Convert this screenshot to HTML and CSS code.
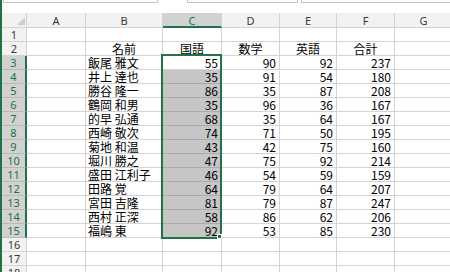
FILE: index.html
```html
<!DOCTYPE html>
<html lang="ja">
<head>
  <meta charset="UTF-8" />
  <title>Book1 - Excel</title>
  <link rel="stylesheet" href="styles.css">
</head>
<body>
  <div class="topbar">
    <div class="namebox"></div>
    <div class="fxbox"></div>
    <div class="formula"></div>
  </div>

  <div class="sheet">
    <div class="corner">
      <svg width="8" height="8" viewBox="0 0 8 8"><polygon points="8,0 8,8 0,8" fill="#cfcfcf"/></svg>
    </div>
    <div class="ch">A</div>
    <div class="ch">B</div>
    <div class="ch sel">C</div>
    <div class="ch">D</div>
    <div class="ch">E</div>
    <div class="ch">F</div>
    <div class="ch">G</div>

    <div class="rh">1</div>
    <div class="c"></div><div class="c"></div><div class="c"></div><div class="c"></div><div class="c"></div><div class="c"></div><div class="c"></div>

    <div class="rh">2</div>
    <div class="c"></div>
    <div class="c ctr">名前</div>
    <div class="c ctr">国語</div>
    <div class="c ctr">数学</div>
    <div class="c ctr">英語</div>
    <div class="c ctr">合計</div>
    <div class="c"></div>

    <div class="rh sel">3</div>
    <div class="c"></div><div class="c">飯尾 雅文</div><div class="c num">55</div><div class="c num">90</div><div class="c num">92</div><div class="c num">237</div><div class="c"></div>

    <div class="rh sel">4</div>
    <div class="c"></div><div class="c">井上 達也</div><div class="c num hi">35</div><div class="c num">91</div><div class="c num">54</div><div class="c num">180</div><div class="c"></div>

    <div class="rh sel">5</div>
    <div class="c"></div><div class="c">勝谷 隆一</div><div class="c num hi">86</div><div class="c num">35</div><div class="c num">87</div><div class="c num">208</div><div class="c"></div>

    <div class="rh sel">6</div>
    <div class="c"></div><div class="c">鶴岡 和男</div><div class="c num hi">35</div><div class="c num">96</div><div class="c num">36</div><div class="c num">167</div><div class="c"></div>

    <div class="rh sel">7</div>
    <div class="c"></div><div class="c">的早 弘通</div><div class="c num hi">68</div><div class="c num">35</div><div class="c num">64</div><div class="c num">167</div><div class="c"></div>

    <div class="rh sel">8</div>
    <div class="c"></div><div class="c">西崎 敬次</div><div class="c num hi">74</div><div class="c num">71</div><div class="c num">50</div><div class="c num">195</div><div class="c"></div>

    <div class="rh sel">9</div>
    <div class="c"></div><div class="c">菊地 和温</div><div class="c num hi">43</div><div class="c num">42</div><div class="c num">75</div><div class="c num">160</div><div class="c"></div>

    <div class="rh sel">10</div>
    <div class="c"></div><div class="c">堀川 勝之</div><div class="c num hi">47</div><div class="c num">75</div><div class="c num">92</div><div class="c num">214</div><div class="c"></div>

    <div class="rh sel">11</div>
    <div class="c"></div><div class="c">盛田 江利子</div><div class="c num hi">46</div><div class="c num">54</div><div class="c num">59</div><div class="c num">159</div><div class="c"></div>

    <div class="rh sel">12</div>
    <div class="c"></div><div class="c">田路 覚</div><div class="c num hi">64</div><div class="c num">79</div><div class="c num">64</div><div class="c num">207</div><div class="c"></div>

    <div class="rh sel">13</div>
    <div class="c"></div><div class="c">宮田 吉隆</div><div class="c num hi">81</div><div class="c num">79</div><div class="c num">87</div><div class="c num">247</div><div class="c"></div>

    <div class="rh sel">14</div>
    <div class="c"></div><div class="c">西村 正深</div><div class="c num hi">58</div><div class="c num">86</div><div class="c num">62</div><div class="c num">206</div><div class="c"></div>

    <div class="rh sel">15</div>
    <div class="c"></div><div class="c">福嶋 東</div><div class="c num hi">92</div><div class="c num">53</div><div class="c num">85</div><div class="c num">230</div><div class="c"></div>

    <div class="rh">16</div>
    <div class="c"></div><div class="c"></div><div class="c"></div><div class="c"></div><div class="c"></div><div class="c"></div><div class="c"></div>

    <div class="rh">17</div>
    <div class="c"></div><div class="c"></div><div class="c"></div><div class="c"></div><div class="c"></div><div class="c"></div><div class="c"></div>

    <div class="rh">18</div>
    <div class="c"></div><div class="c"></div><div class="c"></div><div class="c"></div><div class="c"></div><div class="c"></div><div class="c"></div>

    <div class="selection"></div>
    <div class="handle"></div>
  </div>
</body>
</html>
```

FILE: styles.css
```css
html, body {
  height: 100%;
}
body {
  margin: 0;
  width: 448px;
  height: 272px;
  overflow: hidden;
  background-color: #fff;
  border-left: 2px solid #217346;
  font-family: "Noto Sans CJK JP", sans-serif;
}
.topbar {
  display: flex;
  height: 13px;
  box-sizing: border-box;
}
.namebox,
.fxbox,
.formula {
  height: 3px;
  box-sizing: border-box;
  border: 1px solid #c6c6c6;
  border-top: none;
}
.namebox {
  margin-left: 1px;
  width: 155px;
}
.fxbox {
  margin-left: 29px;
  width: 111px;
}
.formula {
  margin-left: 3px;
  flex: 1;
  border-right: none;
}
.sheet {
  position: relative;
  display: grid;
  grid-template-columns: 25px 59px 77px 59px 58px 57px 58px 58px;
  grid-template-rows: 15px;
  grid-auto-rows: 14px;
}
.sheet > div {
  box-sizing: border-box;
}
.corner {
  display: flex;
  justify-content: flex-end;
  align-items: flex-end;
  padding: 0 1px 2px 0;
  background-color: #f2f2f2;
  border-right: 1px solid #d4d4d4;
  border-bottom: 1px solid #d4d4d4;
}
.corner svg {
  display: block;
}
.ch,
.rh {
  font-family: "Noto Sans", sans-serif;
  font-size: 11px;
  line-height: 13px;
  color: #3a3a3a;
  text-align: center;
  background-color: #f2f2f2;
  border-right: 1px solid #d4d4d4;
  border-bottom: 1px solid #d4d4d4;
}
.ch {
  padding-top: 1px;
}
.ch.sel {
  background-color: #d2d2d2;
  color: #217346;
  border-bottom: 2px solid #217346;
}
.rh.sel {
  background-color: #d2d2d2;
  color: #217346;
  border-right: 2px solid #217346;
  border-bottom-color: #b9b9b9;
}
.c {
  font-size: 12px;
  line-height: 13px;
  color: #000;
  padding: 0 2px;
  white-space: nowrap;
  border-right: 1px solid #d4d4d4;
  border-bottom: 1px solid #d4d4d4;
}
.ctr {
  text-align: center;
}
.num {
  text-align: right;
  padding-right: 3px;
}
.hi {
  background-color: #c6c6c6;
  border-bottom-color: #ababab;
}
.selection {
  position: absolute;
  left: 159px;
  top: 41px;
  width: 61px;
  height: 185px;
  border: 2px solid #217346;
  pointer-events: none;
}
.handle {
  position: absolute;
  left: 215px;
  top: 221px;
  width: 5px;
  height: 5px;
  background-color: #217346;
  border: 1px solid #fff;
  box-sizing: content-box;
}
```
